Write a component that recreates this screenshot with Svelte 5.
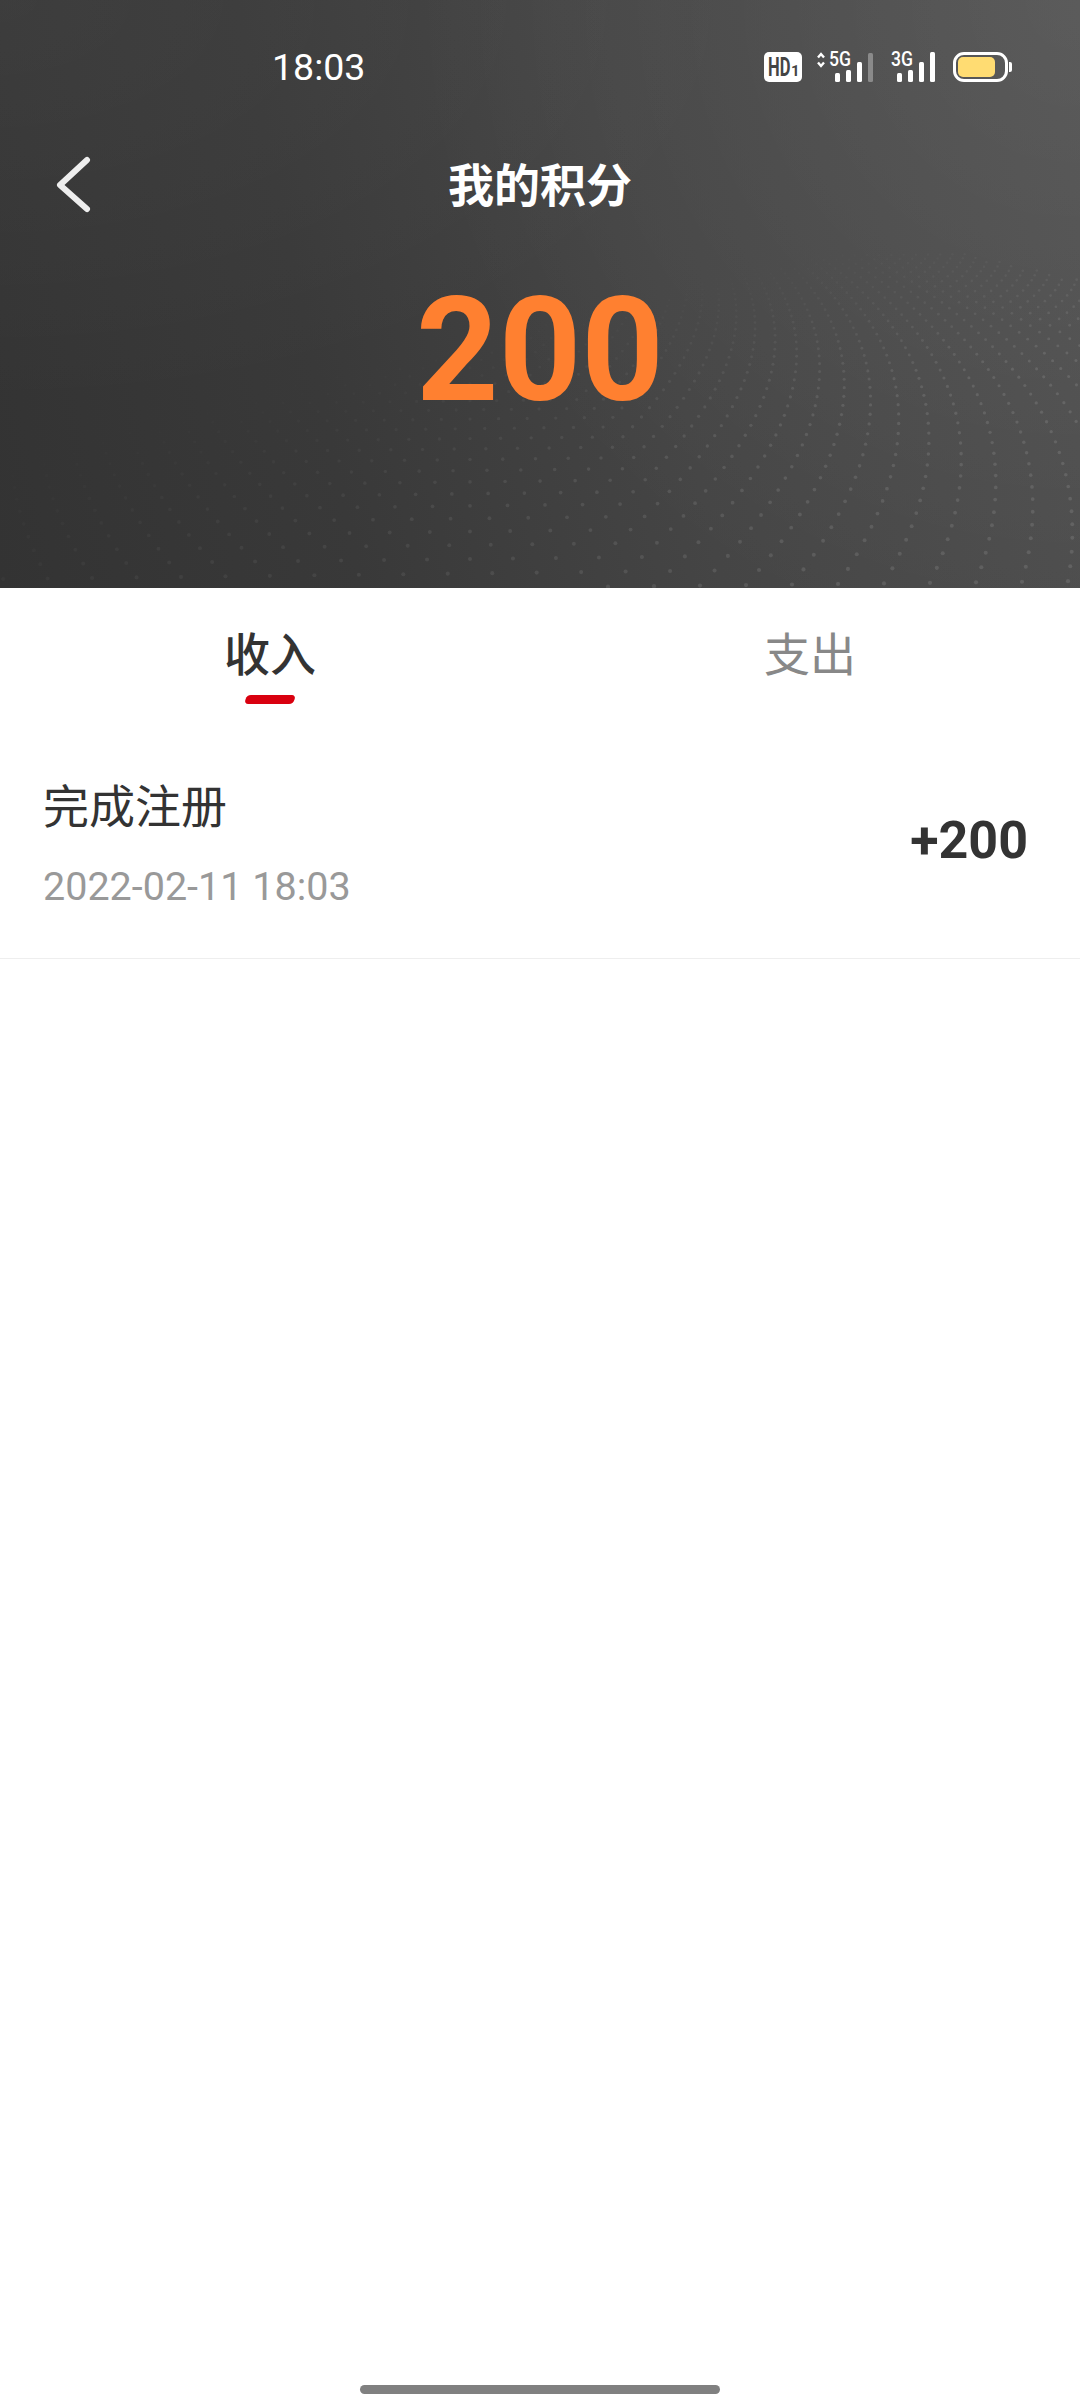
<script lang="ts">
	// perspective dot field behind the header, fading up and to the left
	function buildDots() {
		const dots = [];
		for (let row = 0; row < 40; row++) {
			const s = Math.exp(-0.034 * row);
			for (let col = -40; col <= 40; col++) {
				const X = col * 46 + (row % 2 ? 23 : 0);
				const x = 470 + X * s;
				if (x < 0 || x > 1080) continue;
				const y = 141 + 447 * s + 6 - 0.012 * x;
				if (y > 587) continue;
				const limit = 440 - 0.24 * x;
				const fadeY = Math.min(1, Math.max(0, (y - limit) / 170));
				if (fadeY === 0) continue;
				const fadeX = 0.3 + 0.7 * Math.min(1, x / 800);
				dots.push({ x, y, r: 0.9 + 1.2 * s, o: 0.11 * fadeY * fadeX });
			}
		}
		return dots;
	}

	const dots = buildDots();
	const tabs = [
		{ label: '收入', active: true },
		{ label: '支出', active: false }
	];
</script>

<div class="page">
	<header class="hero">
		<svg class="dots" width="1080" height="588" viewBox="0 0 1080 588" aria-hidden="true">
			{#each dots as d}
				<circle cx={d.x} cy={d.y} r={d.r} fill="#fff" opacity={d.o} />
			{/each}
		</svg>

		<div class="status">
			<span class="time">18:03</span>
			<svg class="status-icons" width="250" height="40" viewBox="0 -4 250 40" aria-hidden="true">
				<rect x="0" y="1" width="38" height="30" rx="5" fill="#fff" />
				<text transform="translate(4 25) scale(0.66 1)" class="hd">HD</text>
				<text x="27" y="25" class="hd-one">1</text>

				<path d="M54 6.5l3-3.5 3 3.5M54 11.5l3 3.5 3-3.5" fill="none" stroke="#fff" stroke-width="2.4" />
				<text x="65" y="15" class="net" textLength="22" lengthAdjust="spacingAndGlyphs">5G</text>
				<rect x="71" y="22" width="5" height="9" rx="1.5" fill="#fff" />
				<rect x="82" y="19" width="5" height="12" rx="1.5" fill="#fff" />
				<rect x="93" y="11" width="5" height="20" rx="1.5" fill="#fff" />
				<rect x="104" y="2" width="5" height="29" rx="1.5" fill="#8a8a8a" />

				<text x="127" y="15" class="net" textLength="22" lengthAdjust="spacingAndGlyphs">3G</text>
				<rect x="133" y="22" width="5" height="9" rx="1.5" fill="#fff" />
				<rect x="144" y="19" width="5" height="12" rx="1.5" fill="#fff" />
				<rect x="155" y="11" width="5" height="20" rx="1.5" fill="#fff" />
				<rect x="166" y="1" width="5" height="30" rx="1.5" fill="#fff" />

				<rect x="190.5" y="2.5" width="52" height="27" rx="9.5" fill="none" stroke="#fff" stroke-width="3" />
				<rect x="194" y="6" width="37" height="20" rx="5" fill="#ffdc72" />
				<path d="M245 11h1a2 2 0 0 1 2 2v6a2 2 0 0 1-2 2h-1z" fill="#fff" />
			</svg>
		</div>

		<div class="nav">
			<svg class="back" width="40" height="60" viewBox="0 0 40 60" aria-hidden="true">
				<path d="M31 4 L4 29 L31 53" fill="none" stroke="#eee" stroke-width="6" stroke-linecap="round" stroke-linejoin="round" />
			</svg>
			<h1>我的积分</h1>
		</div>

		<div class="points">200</div>
	</header>

	<nav class="tabs">
		{#each tabs as tab}
			<div class="tab" class:active={tab.active}>{tab.label}</div>
		{/each}
	</nav>

	<div class="row">
		<div class="info">
			<div class="name">完成注册</div>
			<div class="date">2022-02-11 18:03</div>
		</div>
		<div class="amount">+200</div>
	</div>

	<div class="home-bar"></div>
</div>

<style>
	:global(body) {
		background: #fff;
	}

	.page {
		width: 1080px;
		height: 2400px;
		display: flex;
		flex-direction: column;
		overflow: hidden;
		background: #fff;
		font-family: Roboto, 'Noto Sans CJK SC', sans-serif;
	}

	.hero {
		position: relative;
		height: 588px;
		flex: none;
		background:
			radial-gradient(circle at 100% 0, rgba(255, 255, 255, 0.07), transparent 55%),
			radial-gradient(ellipse at 0 0, rgba(255, 255, 255, 0.04), transparent 50%),
			linear-gradient(78deg, #333 0%, #393939 30%, #454545 60%, #4f4f4f 100%);
		color: #fff;
	}

	.dots {
		position: absolute;
		left: 0;
		top: 0;
	}

	.status {
		position: relative;
		display: flex;
		align-items: center;
		justify-content: space-between;
		height: 32px;
		padding: 51px 66px 0 272px;
	}

	.time {
		font-size: 37.5px;
		font-weight: 400;
		line-height: 32px;
	}

	.status-icons {
		display: block;
	}

	.hd {
		font: 700 25px Roboto, sans-serif;
		fill: #444;
	}

	.hd-one {
		font: 700 15px Roboto, sans-serif;
		fill: #444;
	}

	.net {
		font: 500 20px Roboto, sans-serif;
		fill: #fff;
	}

	.nav {
		position: relative;
		height: 60px;
		margin-top: 72px;
		display: flex;
		align-items: center;
		justify-content: center;
	}

	.back {
		position: absolute;
		left: 56px;
		top: 1px;
	}

	h1 {
		margin: 0 0 6px;
		font-size: 46px;
		font-weight: 700;
		line-height: 60px;
		font-family: 'Noto Sans CJK SC', sans-serif;
	}

	.points {
		position: relative;
		margin-top: 64px;
		text-align: center;
		font-size: 144px;
		font-weight: 700;
		line-height: 144px;
		color: #ff8030;
	}

	.tabs {
		display: grid;
		grid-template-columns: 1fr 1fr;
		height: 116px;
		flex: none;
	}

	.tab {
		position: relative;
		padding-top: 33px;
		text-align: center;
		font-family: 'Noto Sans CJK SC', sans-serif;
		font-size: 46px;
		line-height: 60px;
		color: #888;
	}

	.tab.active {
		color: #333;
		font-weight: 500;
	}

	.tab.active::after {
		content: '';
		position: absolute;
		left: 50%;
		top: 107px;
		width: 49px;
		height: 9px;
		transform: translateX(-50%) skewX(-18deg);
		border-radius: 4px;
		background: #d9000f;
	}

	.row {
		display: flex;
		align-items: flex-start;
		justify-content: space-between;
		height: 255px;
		flex: none;
		box-sizing: border-box;
		padding: 69px 52px 0 43px;
		border-bottom: 1.5px solid #eee;
	}

	.name {
		font-family: 'Noto Sans CJK SC', sans-serif;
		font-size: 46px;
		line-height: 60px;
		color: #333;
	}

	.date {
		margin-top: 31px;
		font-size: 39.5px;
		line-height: 46px;
		color: #999;
	}

	.amount {
		margin-top: 38px;
		font-size: 52px;
		line-height: 60px;
		font-weight: 700;
		color: #333;
	}

	.home-bar {
		width: 360px;
		height: 9px;
		margin: auto auto 6px;
		border-radius: 5px;
		background: #808080;
	}
</style>
